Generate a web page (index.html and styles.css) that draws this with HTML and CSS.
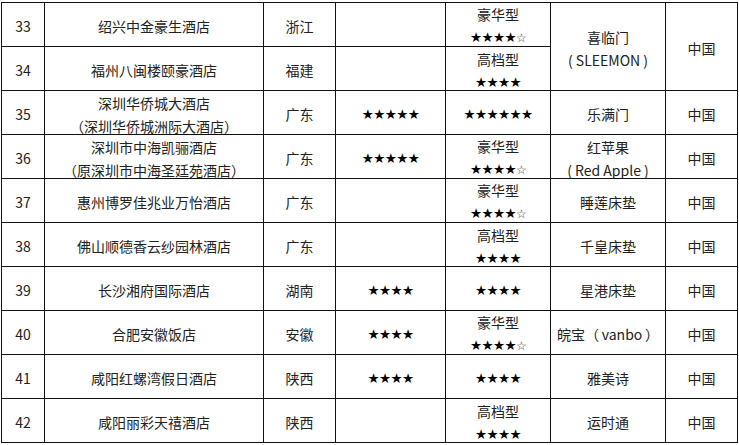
FILE: index.html
```html
<!DOCTYPE html>
<html lang="zh-CN">
<head>
<meta charset="utf-8">
<title>酒店床垫品牌表</title>
<link rel="stylesheet" href="styles.css">
</head>
<body>
<div class="sheet">
  <div class="c">33</div>
  <div class="c">绍兴中金豪生酒店</div>
  <div class="c">浙江</div>
  <div class="c"></div>
  <div class="c two"><span>豪华型</span><span class="st">★★★★<i>☆</i></span></div>
  <div class="c two span2"><span>喜临门</span><span>( SLEEMON )</span></div>
  <div class="c span2">中国</div>

  <div class="c">34</div>
  <div class="c">福州八闽楼颐豪酒店</div>
  <div class="c">福建</div>
  <div class="c"></div>
  <div class="c two"><span>高档型</span><span class="st">★★★★</span></div>

  <div class="c">35</div>
  <div class="c two"><span>深圳华侨城大酒店</span><span>（深圳华侨城洲际大酒店）</span></div>
  <div class="c">广东</div>
  <div class="c st">★★★★★</div>
  <div class="c st">★★★★★★</div>
  <div class="c">乐满门</div>
  <div class="c">中国</div>

  <div class="c">36</div>
  <div class="c two"><span>深圳市中海凯骊酒店</span><span>（原深圳市中海圣廷苑酒店）</span></div>
  <div class="c">广东</div>
  <div class="c st">★★★★★</div>
  <div class="c two"><span>豪华型</span><span class="st">★★★★<i>☆</i></span></div>
  <div class="c two"><span>红苹果</span><span>( Red Apple )</span></div>
  <div class="c">中国</div>

  <div class="c">37</div>
  <div class="c">惠州博罗佳兆业万怡酒店</div>
  <div class="c">广东</div>
  <div class="c"></div>
  <div class="c two"><span>豪华型</span><span class="st">★★★★<i>☆</i></span></div>
  <div class="c">睡莲床垫</div>
  <div class="c">中国</div>

  <div class="c">38</div>
  <div class="c">佛山顺德香云纱园林酒店</div>
  <div class="c">广东</div>
  <div class="c"></div>
  <div class="c two"><span>高档型</span><span class="st">★★★★</span></div>
  <div class="c">千皇床垫</div>
  <div class="c">中国</div>

  <div class="c">39</div>
  <div class="c">长沙湘府国际酒店</div>
  <div class="c">湖南</div>
  <div class="c st">★★★★</div>
  <div class="c st">★★★★</div>
  <div class="c">星港床垫</div>
  <div class="c">中国</div>

  <div class="c">40</div>
  <div class="c">合肥安徽饭店</div>
  <div class="c">安徽</div>
  <div class="c st">★★★★</div>
  <div class="c two"><span>豪华型</span><span class="st">★★★★<i>☆</i></span></div>
  <div class="c">皖宝（&#8201;vanbo&#8201;）</div>
  <div class="c">中国</div>

  <div class="c">41</div>
  <div class="c">咸阳红螺湾假日酒店</div>
  <div class="c">陕西</div>
  <div class="c st">★★★★</div>
  <div class="c st">★★★★</div>
  <div class="c">雅美诗</div>
  <div class="c">中国</div>

  <div class="c">42</div>
  <div class="c">咸阳丽彩天禧酒店</div>
  <div class="c">陕西</div>
  <div class="c"></div>
  <div class="c two"><span>高档型</span><span class="st">★★★★</span></div>
  <div class="c">运时通</div>
  <div class="c">中国</div>
</div>
</body>
</html>
```

FILE: styles.css
```css
html, body {
  margin: 0;
  padding: 0;
  background: #fff;
}

body {
  width: 739px;
  height: 445px;
  overflow: hidden;
}

.sheet {
  margin: 2px 0 0 1px;
  width: 737px;
  display: grid;
  grid-template-columns: 42px 218px 71px 109px 104px 114px 71px;
  grid-template-rows: repeat(10, 43px);
  gap: 1px;
  padding: 1px;
  box-sizing: border-box;
  background: #111;
  font-family: "Noto Sans CJK SC", "Noto Sans", sans-serif;
  font-size: 14px;
  color: #222;
}

.c {
  background: #fff;
  display: flex;
  flex-direction: column;
  align-items: center;
  justify-content: center;
  text-align: center;
  line-height: 22px;
  padding-top: 2px;
  white-space: nowrap;
  overflow: visible;
}

.c.two {
  padding-top: 4px;
  line-height: 23px;
}

.c.two span {
  display: block;
}

.span2 {
  grid-row: span 2;
}

.st {
  font-family: "DejaVu Sans", sans-serif;
  font-size: 13.5px;
  letter-spacing: -0.6px;
  color: #000;
}

.c.two .st {
  line-height: 23px;
}

.st i {
  font-style: normal;
  font-size: 12px;
  color: #333;
}
```
